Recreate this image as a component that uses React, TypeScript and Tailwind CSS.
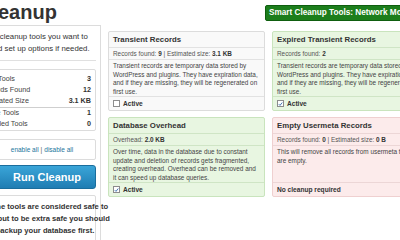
import type { ReactNode } from "react";

type Tone = "plain" | "green" | "red";

const tones: Record<Tone, { box: string; line: string }> = {
  plain: { box: "bg-[#f9f9f9] border-[#dcdcdc]", line: "border-[#e2e2e2]" },
  green: { box: "bg-[#e8f6e1] border-[#c9e4bd]", line: "border-[#cfe5c5]" },
  red: { box: "bg-[#fcebeb] border-[#efd0d0]", line: "border-[#ecd6d6]" },
};

function Check({ checked }: { checked: boolean }) {
  return (
    <span className="inline-flex h-[7px] w-[7px] items-center justify-center border border-[#8c8c8c] bg-white">
      {checked && (
        <svg viewBox="0 0 8 8" className="h-[6px] w-[6px]">
          <path d="M1.2 4.2 L3.2 6.2 L6.8 1.6" fill="none" stroke="#3a6fb0" strokeWidth="1.5" />
        </svg>
      )}
    </span>
  );
}

function ToolCard({
  tone,
  title,
  info,
  children,
  footer,
}: {
  tone: Tone;
  title: string;
  info: ReactNode;
  children: ReactNode;
  footer: ReactNode;
}) {
  const t = tones[tone];
  return (
    <div className={`flex flex-col overflow-hidden rounded-[2px] border ${t.box}`}>
      <div className={`flex h-[16px] items-center border-b px-[4px] text-[7.8px] font-bold text-[#333] ${t.line}`}>
        {title}
      </div>
      <div className={`flex h-[12px] items-center border-b px-[4px] text-[6.4px] text-[#555] ${t.line}`}>
        <span>{info}</span>
      </div>
      <div className={`flex-1 border-b px-[4px] pt-[2px] text-[6.4px] leading-[8.5px] text-[#444] ${t.line}`}>
        {children}
      </div>
      <div className="flex h-[13px] items-center gap-[3px] px-[4px] text-[6.6px] font-bold text-[#333]">
        {footer}
      </div>
    </div>
  );
}

export default function App() {
  const stats = [
    ["Total Tools", "3"],
    ["Records Found", "12"],
    ["Estimated Size", "3.1 KB"],
  ];
  const counts = [
    ["Active Tools", "1"],
    ["Disabled Tools", "0"],
  ];

  return (
    <div className="h-[240px] w-[400px] overflow-hidden bg-white font-['Liberation_Sans',Arial,sans-serif]">
      <div className="ml-[-24px] w-[460px]">
        {/* header */}
        <div className="flex h-[25px] items-start">
          <h2 className="w-[289px] shrink-0 pl-[2px] pt-[1px] text-[20px] font-bold leading-[22px] text-[#333]">
            Cleanup
          </h2>
          <div className="mt-[5px] rounded-l-[2px] border border-[#0f5e0f] bg-[#1c7e1c] px-[3px] py-[2px] text-[8.2px] font-bold leading-[10px] whitespace-nowrap text-white">
            Smart Cleanup Tools: Network Mode
          </div>
        </div>

        <div className="flex items-start">
          {/* sidebar */}
          <div className="w-[125px] border-r border-t border-[#dcdcdc] pb-[4px] pr-[4px]">
            <p className="pt-[5px] text-[7.8px] leading-[12px] text-[#333]">
              Select cleanup tools you want to
              <br />
              run and set up options if needed.
            </p>
            <div className="mt-[5px] border-t border-[#e0e0e0]" />

            <div className="mt-[8px] rounded-[2px] border border-[#dcdcdc] bg-white px-[4px] pt-[4px] text-[7.2px] text-[#444]">
              {stats.map(([k, v]) => (
                <div key={k} className="flex h-[11px] items-center justify-between">
                  <span>{k}</span>
                  <span className="font-bold text-[#333]">{v}</span>
                </div>
              ))}
              <div className="border-t border-[#cfcfcf]" />
              {counts.map(([k, v]) => (
                <div key={k} className="flex h-[11px] items-center justify-between">
                  <span>{k}</span>
                  <span className="font-bold text-[#333]">{v}</span>
                </div>
              ))}
            </div>

            <div className="mt-[8px] flex h-[21px] items-center justify-center rounded-[2px] border border-[#dcdcdc] bg-white pl-[12px] text-[6.5px] text-[#21759b]">
              <span>enable all</span>
              <span className="mx-[2px] text-[#555]">|</span>
              <span>disable all</span>
            </div>

            <button
              type="button"
              className="mt-[5px] flex h-[24px] w-full items-center justify-center rounded-[3px] border border-[#1a6d9c] bg-gradient-to-b from-[#3aa5d8] to-[#1f7db3] pl-[22px] text-[11px] font-bold text-white"
            >
              Run Cleanup
            </button>

            <div className="mt-[6px] flex flex-col items-center rounded-[2px] border border-[#dcdcdc] bg-white py-[5px] pl-[18px] text-[7.6px] font-bold leading-[12px] whitespace-nowrap text-[#333]">
              <span>All the tools are considered safe to</span>
              <span>use, but to be extra safe you should</span>
              <span>backup your database first.</span>
            </div>
          </div>

          {/* tools grid */}
          <div className="ml-[7px] mt-[6px] grid w-[321px] grid-cols-2 gap-x-[7px] gap-y-[6px]">
            <ToolCard
              tone="plain"
              title="Transient Records"
              info={
                <>
                  Records found: <b className="text-[#333]">9</b> | Estimated size: <b className="text-[#333]">3.1 KB</b>
                </>
              }
              footer={
                <>
                  <Check checked={false} /> Active
                </>
              }
            >
              Transient records are temporary data stored by WordPress and plugins. They have expiration data, and if
              they are missing, they will be regenerated on first use.
            </ToolCard>
            <ToolCard
              tone="green"
              title="Expired Transient Records"
              info={
                <>
                  Records found: <b className="text-[#333]">2</b>
                </>
              }
              footer={
                <>
                  <Check checked /> Active
                </>
              }
            >
              Transient records are temporary data stored by WordPress and plugins. They have expiration data, and if
              they are missing, they will be regenerated on first use.
            </ToolCard>
            <ToolCard
              tone="green"
              title="Database Overhead"
              info={
                <>
                  Overhead: <b className="text-[#333]">2.0 KB</b>
                </>
              }
              footer={
                <>
                  <Check checked /> Active
                </>
              }
            >
              Over time, data in the database due to constant update and deletion of records gets fragmented, creating
              overhead. Overhead can be removed and it can speed up database queries.
            </ToolCard>
            <ToolCard
              tone="red"
              title="Empty Usermeta Records"
              info={
                <>
                  Records found: <b className="text-[#333]">0</b> | Estimated size: <b className="text-[#333]">0 B</b>
                </>
              }
              footer={<>No cleanup required</>}
            >
              <span className="whitespace-nowrap">This will remove all records from usermeta table that</span>
              <br />
              are empty.
            </ToolCard>
          </div>
        </div>
      </div>
    </div>
  );
}
